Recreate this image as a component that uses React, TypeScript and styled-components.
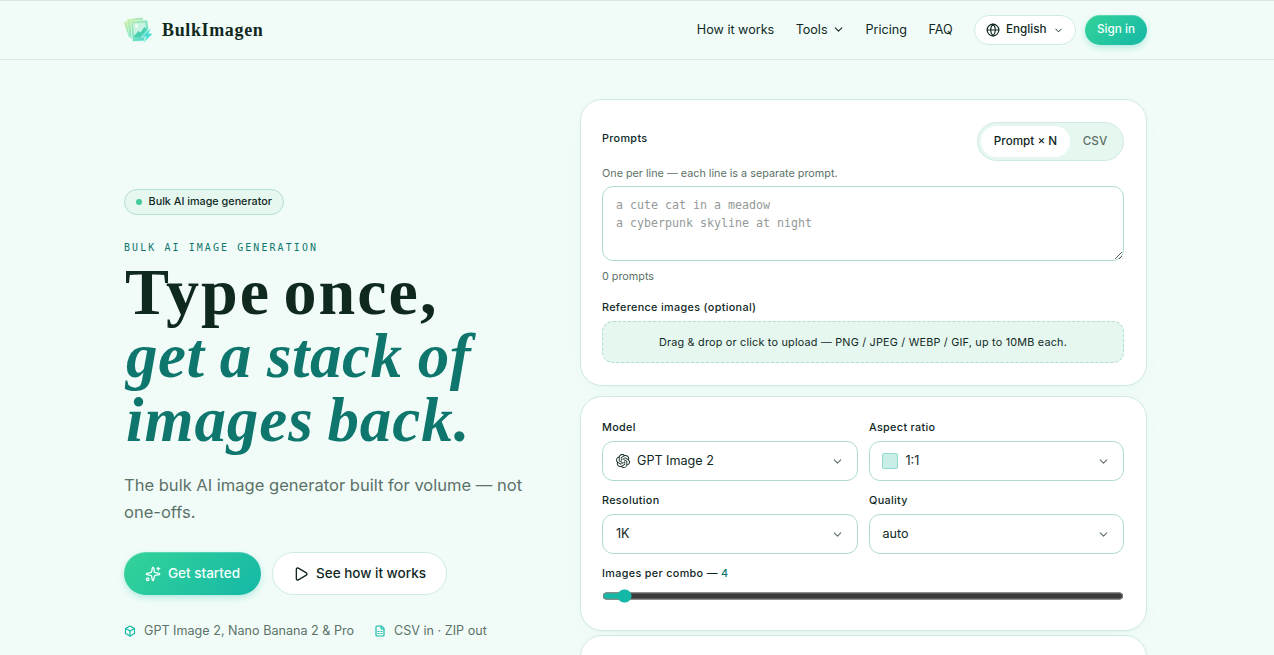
import React from "react";
import styled, { createGlobalStyle, css } from "styled-components";
import { Box, ChevronDown, FileSpreadsheet, Globe, Play, Sparkles } from "lucide-react";
import { SiOpenai } from "react-icons/si";

const Global = createGlobalStyle`
  * { box-sizing: border-box; }
  body {
    margin: 0;
    height: 655px;
    overflow: hidden;
    background: #f1fcf8;
    color: #10291f;
    font-family: Inter, "Liberation Sans", sans-serif;
    font-size: 12.6px;
  }
`;

const serif = `"Liberation Serif", "Noto Sans", serif`;
const mono = `"DejaVu Sans Mono", "Liberation Mono", monospace`;

const Page = styled.div`
  height: 655px;
  overflow: hidden;
`;

const Header = styled.header`
  height: 60px;
  border-top: 1px solid #dae5e1;
  border-bottom: 1px solid #dcebe6;
`;

const HeaderInner = styled.div`
  width: 1023px;
  height: 58px;
  margin-left: 124px;
  display: flex;
  align-items: center;
  justify-content: space-between;
`;

const Brand = styled.a`
  display: flex;
  align-items: center;
  gap: 9px;
  font: 700 18px/24px ${serif};
  letter-spacing: 0.64px;
  svg { display: block; }
`;

const Nav = styled.nav`
  display: flex;
  align-items: center;
  height: 30px;
`;

const NavLink = styled.a<{ $gap: number }>`
  display: flex;
  align-items: center;
  gap: 4px;
  margin-right: ${(p) => p.$gap}px;
  padding-bottom: 1px;
  font-size: 12.6px;
  white-space: nowrap;
`;

const Language = styled.button`
  display: flex;
  align-items: center;
  gap: 6px;
  width: 102px;
  height: 30px;
  padding: 0 11px;
  margin-right: 9px;
  border: 1px solid #cfebe1;
  border-radius: 15px;
  background: #fff;
  color: #10291f;
  font: 500 11.7px/16px Inter, sans-serif;
  span { padding-bottom: 2px; }
  svg:last-child { margin-left: auto; }
`;

const primary = css`
  border: 0;
  background: linear-gradient(135deg, #34d399, #14b8a6);
  color: #f3fffb;
  box-shadow: inset 0 1px 0 rgba(255, 255, 255, 0.22), 0 3px 9px -2px rgba(20, 184, 166, 0.4);
`;

const SignIn = styled.button`
  ${primary}
  width: 62px;
  height: 30px;
  padding: 0 0 2px;
  border-radius: 15px;
  font: 500 11.7px/16px Inter, sans-serif;
`;

const Main = styled.main`
  display: flex;
  justify-content: space-between;
  width: 1023px;
  margin-left: 124px;
  padding-top: 39px;
`;

const Hero = styled.section`
  width: 412px;
  padding-top: 90px;
`;

const Badge = styled.div`
  display: flex;
  align-items: center;
  gap: 7px;
  width: 160px;
  height: 26px;
  padding: 0 11px;
  border: 1px solid #b5dfd0;
  border-radius: 13px;
  background: #e6f7ef;
  font-size: 10.8px;
  font-weight: 500;
  white-space: nowrap;
  span { padding-bottom: 2px; }
  &::before {
    content: "";
    width: 6px;
    height: 6px;
    border-radius: 50%;
    background: #44cc98;
  }
`;

const Eyebrow = styled.p`
  margin: 26px 0 0;
  font: 400 9.9px/14px ${mono};
  letter-spacing: 2.14px;
  color: #0f766e;
  white-space: nowrap;
`;

const Title = styled.h1`
  margin: 5px 0 0;
  white-space: nowrap;
`;

const TitleLine = styled.span`
  display: block;
  padding-left: 1px;
  font: 700 66px/64px ${serif};
  letter-spacing: 2px;
  word-spacing: -6px;
`;

const TitleAccent = styled.em<{ $tracking: number; $words: number; $indent: number }>`
  display: block;
  padding-left: ${(p) => p.$indent}px;
  color: #0f766e;
  font: italic 700 63px/64px ${serif};
  letter-spacing: ${(p) => p.$tracking}px;
  word-spacing: ${(p) => p.$words}px;
`;

const Lead = styled.p`
  margin: 20px 0 0;
  font-size: 16.55px;
  line-height: 27px;
  color: #5c7268;
`;

const Actions = styled.div`
  display: flex;
  gap: 11px;
  margin-top: 26px;
`;

const Action = styled.button<{ $primary?: boolean }>`
  display: flex;
  align-items: center;
  justify-content: center;
  gap: 7px;
  width: ${(p) => (p.$primary ? 137 : 175)}px;
  height: 43px;
  padding: 0;
  border: 1px solid #cfebe1;
  border-radius: 22px;
  background: #fff;
  color: #10291f;
  font: 500 13.5px/20px Inter, sans-serif;
  ${(p) => p.$primary && primary}
  span { padding-bottom: 1px; }
`;

const Features = styled.div`
  display: flex;
  gap: 20px;
  margin-top: 27px;
`;

const Feature = styled.div`
  display: flex;
  align-items: center;
  gap: 8px;
  height: 17px;
  font-size: 12.6px;
  color: #5c7268;
  white-space: nowrap;
  svg { color: #14b8a6; }
`;

const Panel = styled.section`
  width: 567px;
`;

const Card = styled.div<{ $height: number; $gap?: number; $top?: number }>`
  height: ${(p) => p.$height}px;
  margin-bottom: ${(p) => p.$gap ?? 0}px;
  padding: ${(p) => p.$top ?? 22}px 22px 0 21px;
  border: 1px solid #cfebe1;
  border-radius: 22px;
  background: #fff;
  box-shadow: 0 1px 2px rgba(15, 118, 110, 0.03), 0 6px 20px rgba(15, 118, 110, 0.025);
`;

const PromptHead = styled.div`
  display: flex;
  justify-content: space-between;
  height: 39px;
`;

const Label = styled.div`
  font-size: 10.8px;
  line-height: 14px;
  font-weight: 500;
  letter-spacing: 0.34px;
  span { color: #0f766e; }
`;

const PromptLabel = styled(Label)`
  margin-top: 10px;
`;

const Segments = styled.div`
  display: flex;
  width: 147px;
  height: 39px;
  padding: 3px;
  border: 1px solid #cfebe1;
  border-radius: 20px;
  background: #e6f7ef;
`;

const Segment = styled.button<{ $active?: boolean }>`
  width: ${(p) => (p.$active ? 89 : 50)}px;
  height: 31px;
  padding: 0 0 1px;
  border: 0;
  border-radius: 16px;
  background: ${(p) => (p.$active ? "#fff" : "transparent")};
  color: ${(p) => (p.$active ? "#10291f" : "#5c7268")};
  font: 500 11.7px/16px Inter, sans-serif;
`;

const Hint = styled.p<{ $top: number }>`
  margin: ${(p) => p.$top}px 0 0;
  font-size: 10.8px;
  line-height: 14px;
  color: #5c7268;
`;

const PromptInput = styled.textarea`
  display: block;
  width: 522px;
  height: 75px;
  margin-top: 5px;
  padding: 9px 13px;
  border: 1px solid #b0dccd;
  border-radius: 11px;
  background: #fff;
  font: 400 11.63px/18px ${mono};
  resize: vertical;
  &::placeholder { color: #949a97; opacity: 1; }
`;

const RefLabel = styled(Label)`
  margin-top: 17px;
`;

const Drop = styled.div`
  display: flex;
  align-items: center;
  justify-content: center;
  width: 522px;
  height: 42px;
  margin-top: 6px;
  border: 1px dashed #b0dccd;
  border-radius: 11px;
  background: #e6f7ef;
  font-size: 10.8px;
  letter-spacing: 0.22px;
`;

const Fields = styled.div`
  display: grid;
  grid-template-columns: 256px 255px;
  gap: 12px 11px;
`;

const Field = styled.div`
  height: 61px;
`;

const Select = styled.button<{ $pad: number }>`
  display: flex;
  align-items: center;
  gap: 7px;
  width: 100%;
  height: 40px;
  margin-top: 6px;
  padding: 0 13px 0 ${(p) => p.$pad}px;
  border: 1px solid #b0dccd;
  border-radius: 11px;
  background: #fff;
  color: #10291f;
  font: 400 12.6px/18px Inter, sans-serif;
  svg:last-child { margin-left: auto; color: #5f7069; }
`;

const Swatch = styled.i`
  width: 16px;
  height: 16px;
  border: 1px solid #93d9cd;
  border-radius: 2px;
  background: #c9eee8;
`;

const SliderLabel = styled(Label)`
  margin-top: 12px;
`;

const Slider = styled.input`
  display: block;
  zoom: 0.9;
  width: 580px;
  height: 16px;
  margin: 9px 0 0;
  accent-color: #14b8a6;
`;

function Logo() {
  return (
    <svg width="29" height="27" viewBox="0 0 29 27" fill="none">
      <defs>
        <linearGradient id="leaf" x1="3" y1="1" x2="22" y2="25" gradientUnits="userSpaceOnUse">
          <stop stopColor="#d2f0a0" />
          <stop offset="0.5" stopColor="#83e4bd" />
          <stop offset="1" stopColor="#4bd5cf" />
        </linearGradient>
      </defs>
      <path d="M0 5.500 4 3.500 8 21.500 4.800 20Z" fill="url(#leaf)" />
      <path d="M2.800 2.300 18.600.2 19.500 4 7 5 8 22 5.500 20Z" fill="url(#leaf)" stroke="#effcf8" strokeWidth=".5" />
      <path d="M6.500 4 23.500 3 24.500 12 20 24 8.500 24.500Z" fill="url(#leaf)" stroke="#e6fbf2" strokeWidth=".7" />
      <path d="M8.800 6.200 21.500 5.500 22 12 18 19.500 10.300 20.500Z" fill="#c8f3e3" />
      <path d="M10 19 14.500 14 16.500 15.500 20.500 10 22.500 12 18 20 10.200 20.500Z" fill="#46cfae" />
      <circle cx="12.500" cy="9" r="1.600" fill="#f6fff4" />
      <path d="M27.500 10.500 17.300 19.800 22 20 19 26.500 29 16.600 24.800 16.200Z" fill="#4ddcd1" stroke="#effcf8" strokeWidth=".6" />
    </svg>
  );
}

const fields = [
  { label: "Model", value: "GPT Image 2", icon: <SiOpenai size={14} />, pad: 13 },
  { label: "Aspect ratio", value: "1:1", icon: <Swatch />, pad: 12.4 },
  { label: "Resolution", value: "1K", pad: 13 },
  { label: "Quality", value: "auto", pad: 12.4 },
];

export default function App() {
  return (
    <Page>
      <Global />
      <Header>
        <HeaderInner>
          <Brand><Logo />BulkImagen</Brand>
          <Nav>
            <NavLink $gap={21.4}>How it works</NavLink>
            <NavLink $gap={21}>Tools <ChevronDown size={13} /></NavLink>
            <NavLink $gap={21.4}>Pricing</NavLink>
            <NavLink $gap={21.4}>FAQ</NavLink>
            <Language><Globe size={14} /><span>English</span><ChevronDown size={11} /></Language>
            <SignIn>Sign in</SignIn>
          </Nav>
        </HeaderInner>
      </Header>
      <Main>
        <Hero>
          <Badge><span>Bulk AI image generator</span></Badge>
          <Eyebrow>BULK AI IMAGE GENERATION</Eyebrow>
          <Title>
            <TitleLine>Type once,</TitleLine>
            <TitleAccent $tracking={0.5} $words={-1} $indent={2}>get a stack of</TitleAccent>
            <TitleAccent $tracking={0.95} $words={-3} $indent={2}>images back.</TitleAccent>
          </Title>
          <Lead>The bulk AI image generator built for volume — not one-offs.</Lead>
          <Actions>
            <Action $primary><Sparkles size={16} /><span>Get started</span></Action>
            <Action><Play size={16} /><span>See how it works</span></Action>
          </Actions>
          <Features>
            <Feature><Box size={12} strokeWidth={2.3} />GPT Image 2, Nano Banana 2 &amp; Pro</Feature>
            <Feature><FileSpreadsheet size={12} strokeWidth={2.3} />CSV in · ZIP out</Feature>
          </Features>
        </Hero>
        <Panel>
          <Card $height={287} $gap={10}>
            <PromptHead>
              <PromptLabel>Prompts</PromptLabel>
              <Segments>
                <Segment $active>Prompt × N</Segment>
                <Segment>CSV</Segment>
              </Segments>
            </PromptHead>
            <Hint $top={6}>One per line — each line is a separate prompt.</Hint>
            <PromptInput placeholder={"a cute cat in a meadow\na cyberpunk skyline at night"} />
            <Hint $top={9}>0 prompts</Hint>
            <RefLabel>Reference images (optional)</RefLabel>
            <Drop>Drag &amp; drop or click to upload — PNG / JPEG / WEBP / GIF, up to 10MB each.</Drop>
          </Card>
          <Card $height={235} $gap={4} $top={24}>
            <Fields>
              {fields.map((f) => (
                <Field key={f.label}>
                  <Label>{f.label}</Label>
                  <Select $pad={f.pad}>{f.icon}{f.value}<ChevronDown size={13} /></Select>
                </Field>
              ))}
            </Fields>
            <SliderLabel>Images per combo — <span>4</span></SliderLabel>
            <Slider type="range" min={1} max={100} defaultValue={4} />
          </Card>
          <Card $height={200} />
        </Panel>
      </Main>
    </Page>
  );
}
